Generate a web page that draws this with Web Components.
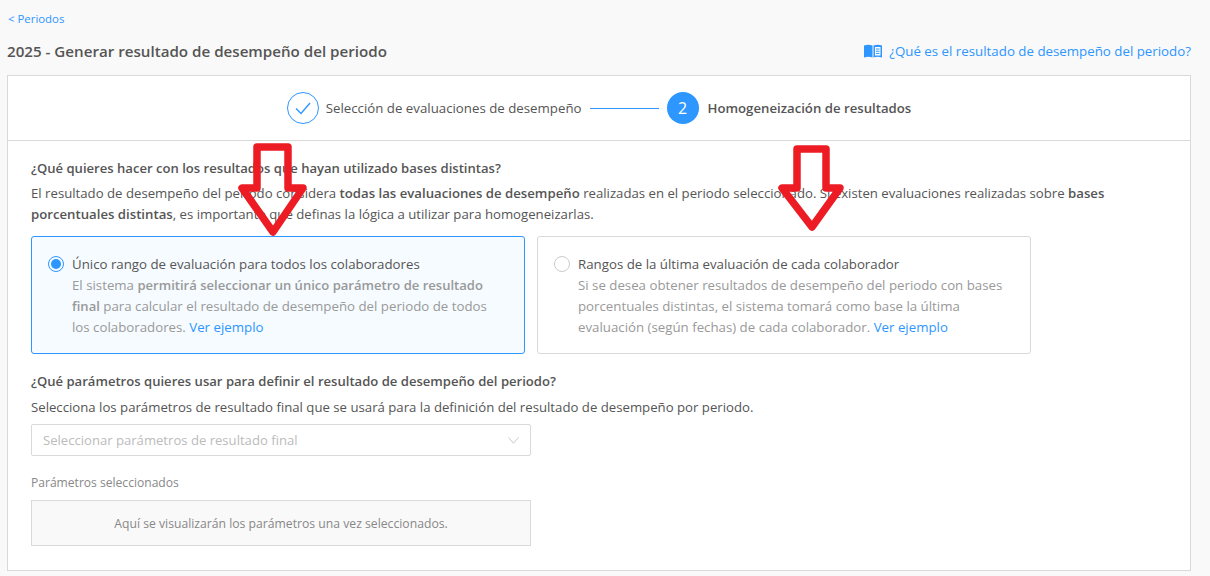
<!DOCTYPE html>
<html lang="es"><head><meta charset="utf-8">
<style>
html,body{margin:0;padding:0;background:#f9f9f9;font-family:"Open Sans","Noto Sans",sans-serif;font-size:13px;color:#555}
</style></head><body>
<template id="t-page"><style>
:host{display:block;height:576px;box-sizing:border-box;padding:0 19px 0 7px;position:relative;overflow:hidden}
.back{display:block;padding:11px 0 0 1px;height:24px;line-height:16px;font-size:11.400px;color:#2d96ff}
.head{display:flex;justify-content:space-between;align-items:flex-start;height:40px;padding-top:6px;box-sizing:border-box}
h1{margin:0;font-size:15.150px;font-weight:600;color:#555;line-height:20px}
.help{display:flex;align-items:center;gap:7px;color:#2d96ff;font-size:13.300px;line-height:20px}
.help svg{display:block}
.arrow{position:absolute;left:0;top:0;pointer-events:none}
</style>
<a class="back">&lt; Periodos</a>
<div class="head"><h1>2025 - Generar resultado de desempeño del periodo</h1>
<span class="help"><svg width="18" height="14" viewBox="0 0 18 14"><path d="M0 1.500C3 .500 6 .500 8.500 1.500V13.500C6 12.500 3 12.500 0 13.500z" fill="#2d96ff"/><path d="M9.500 1.500C12 .500 15 .500 18 1.500V13.500C15 12.500 12 12.500 9.500 13.500z" fill="#2d96ff"/><rect x="11" y="3" width="5.500" height="8.500" fill="#fff"/><path d="M12 5h3.500M12 7.200h3.500M12 9.400h3.500" stroke="#2d96ff" stroke-width="1"/></svg>¿Qué es el resultado de desempeño del periodo?</span></div>
<slot></slot>
<svg class="arrow" width="1210" height="576" viewBox="0 0 1210 576" fill="none" stroke="#ed1c24" stroke-width="7.500" stroke-linejoin="round"><path d="M257 147H288V188H303L273 232L242 188H257Z"/><path d="M797 149H826V188H840L812 227L782 188H797Z"/></svg>
</template>
<template id="t-card"><style>
:host{display:block;box-sizing:border-box;height:496px;background:#fff;border:1px solid #d9d9d9}
</style><slot></slot></template>
<template id="t-steps"><style>
:host{display:flex;align-items:center;justify-content:center;height:64px;border-bottom:1px solid #d9d9d9;box-sizing:content-box;color:#555}
.c{width:32px;height:32px;box-sizing:border-box;border-radius:50%;display:flex;align-items:center;justify-content:center;flex:none}
.done{border:1px solid #2d96ff}
.cur{background:#2d96ff;color:#fff;font-size:16px}
.l{margin-left:7px;font-size:13.270px}
.b{font-weight:600;margin-left:9px;font-size:13.200px}
.line{width:69px;height:1px;background:#2d96ff;margin:0 8px}
</style>
<span class="c done"><svg width="16" height="13" viewBox="0 0 16 13" fill="none" stroke="#2d96ff" stroke-width="1.400"><path d="M1 6.500l5 5L15 1"/></svg></span><span class="l">Selección de evaluaciones de desempeño</span><span class="line"></span><span class="c cur">2</span><span class="l b">Homogeneización de resultados</span>
</template>
<template id="t-body"><style>
:host{display:block;padding:17px 23px 0;font-size:13.200px;line-height:21px;color:#555}
h2{font-size:13.080px;font-weight:600;margin:0;line-height:20px}
p{margin:0}
b{font-weight:600}
.intro{margin-top:5px;margin-bottom:11px;width:1100px}
.opts{display:flex;gap:12px}
h2.q2{margin-top:17px}
p.s{margin-top:6px;margin-bottom:6px}
.lab{color:#888;font-size:12.080px;margin-top:17px;margin-bottom:7px;line-height:20px}
.empty{width:500px;height:46px;box-sizing:border-box;background:#f9f9f9;border:1px solid #d9d9d9;display:flex;align-items:center;justify-content:center;color:#888;font-size:12.200px}
</style>
<h2>¿Qué quieres hacer con los resultados que hayan utilizado bases distintas?</h2>
<p class="intro">El resultado de desempeño del periodo considera <b>todas las evaluaciones de desempeño</b> realizadas en el periodo seleccionado. Si existen evaluaciones realizadas sobre <b>bases porcentuales distintas</b>, es importante que definas la lógica a utilizar para homogeneizarlas.</p>
<div class="opts"><slot name="opts"></slot></div>
<h2 class="q2">¿Qué parámetros quieres usar para definir el resultado de desempeño del periodo?</h2>
<p class="s">Selecciona los parámetros de resultado final que se usará para la definición del resultado de desempeño por periodo.</p>
<slot name="sel"></slot>
<div class="lab">Parámetros seleccionados</div>
<div class="empty">Aquí se visualizarán los parámetros una vez seleccionados.</div>
</template>
<template id="t-opt"><style>
:host{display:flex;box-sizing:border-box;width:494px;height:118px;border:1px solid #d9d9d9;border-radius:3px;background:#fff;padding:17px 16px 0;gap:8px;font-size:13.270px;line-height:21px}
:host([on]){border-color:#2d96ff;background:#f5fbff}
.r{flex:none;width:16px;height:16px;box-sizing:border-box;border:1px solid #ccc;border-radius:50%;margin-top:2px;display:flex;align-items:center;justify-content:center}
:host([on]) .r{border-color:#2d96ff}
:host([on]) .r i{display:block;width:10px;height:10px;border-radius:50%;background:#2d96ff}
.t{color:#555}
.d{color:#999;width:430px}
::slotted(b){font-weight:600;font-size:13.050px}
::slotted(a){color:#2d96ff}
</style><span class="r"><i></i></span><div><div class="t"><slot name="t"></slot></div><div class="d"><slot></slot></div></div></template>
<template id="t-sel"><style>
:host{display:flex;align-items:center;justify-content:space-between;box-sizing:border-box;width:500px;height:32px;border:1px solid #d9d9d9;border-radius:2px;background:#fff;padding:0 11px 0 11px;color:#bbb;font-size:13.100px}
</style><slot></slot><svg width="11" height="7" viewBox="0 0 11 7" fill="none" stroke="#c8c8c8"><path d="M.5.500L5.500 6.200 10.500.500"/></svg></template>
<x-page>
<x-card>
<x-steps></x-steps>
<x-body>
<x-opt slot="opts" on><span slot="t">Único rango de evaluación para todos los colaboradores</span>El sistema <b>permitirá seleccionar un único parámetro de resultado final</b> para calcular el resultado de desempeño del periodo de todos los colaboradores. <a>Ver ejemplo</a></x-opt>
<x-opt slot="opts"><span slot="t">Rangos de la última evaluación de cada colaborador</span>Si se desea obtener resultados de desempeño del periodo con bases porcentuales distintas, el sistema tomará como base la última evaluación (según fechas) de cada colaborador. <a>Ver ejemplo</a></x-opt>
<x-sel slot="sel">Seleccionar parámetros de resultado final</x-sel>
</x-body>
</x-card>
</x-page>
<script>
for (const [n,id] of [['x-page','t-page'],['x-card','t-card'],['x-steps','t-steps'],['x-body','t-body'],['x-opt','t-opt'],['x-sel','t-sel']]) {
  customElements.define(n, class extends HTMLElement {
    constructor(){ super(); this.attachShadow({mode:'open'}).appendChild(document.getElementById(id).content.cloneNode(true)); }
  });
}
</script>
</body></html>
